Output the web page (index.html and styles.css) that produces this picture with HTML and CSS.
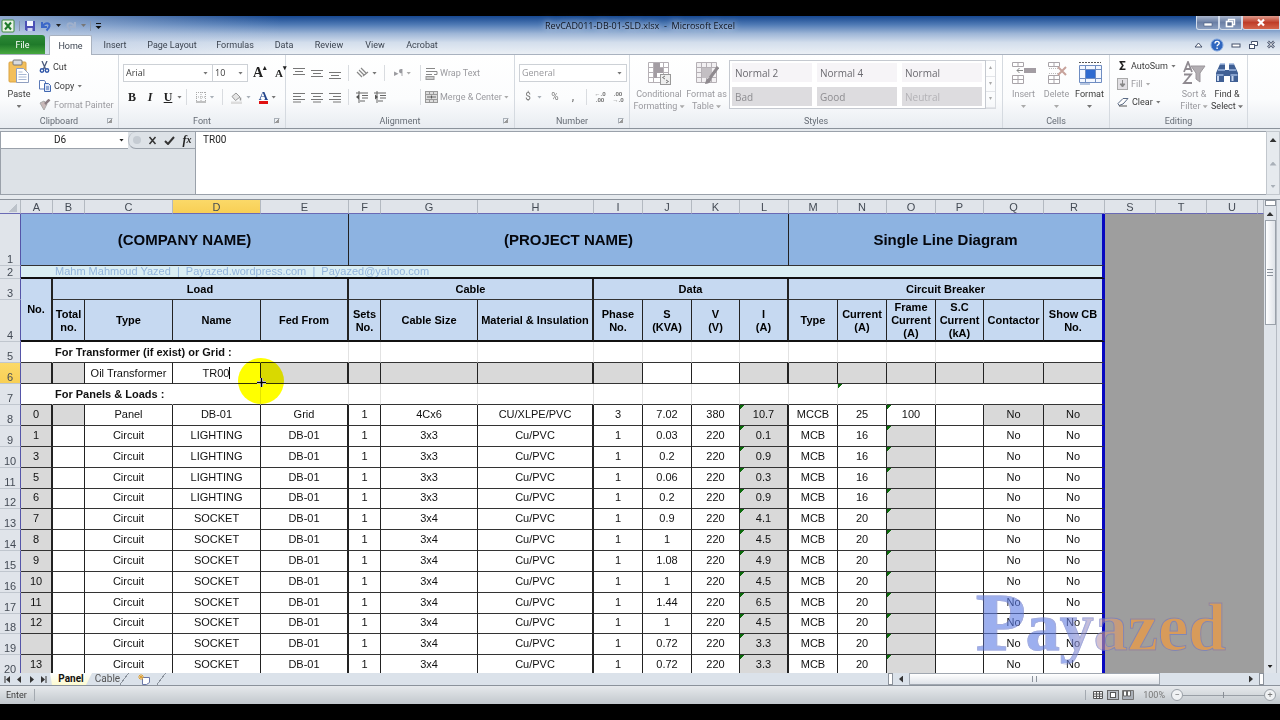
FILE: index.html
```
<!DOCTYPE html>
<html lang="en">
<head>
    <meta charset="UTF-8">
    <meta name="viewport" content="width=device-width, initial-scale=1.0">
    <title>RevCAD011-DB-01-SLD.xlsx - Microsoft Excel</title>
    <link rel="stylesheet" href="styles.css">
</head>
<body>
    <!-- Title bar and ribbon tabs -->
    <header class="window-top">
        <div class="title-bar">
            <div class="quick-access">
                <svg width="14" height="14" viewBox="0 0 14 14"><rect x="1" y="1" width="12" height="12" rx="1" fill="#e9f3e6" stroke="#3c8a3c"/><path d="M4 3.500l6 7M10 3.500l-6 7" stroke="#1f7a2b" stroke-width="2"/></svg>
                <span class="qa-line"></span>
                <button aria-label="Save"><svg width="12" height="12" viewBox="0 0 12 12"><path d="M1 1h10v10H2.500L1 9.500z" fill="#4a4fb5"/><rect x="3" y="1" width="6" height="5" fill="#f4f6ff"/><rect x="3.500" y="8" width="5" height="3" fill="#cfd4f2"/></svg></button>
                <button aria-label="Undo"><svg width="12" height="12" viewBox="0 0 12 12"><path d="M2 2v5h5M2.500 6.500C5 2 10 2.500 9.500 6c-.3 2-1.500 3-3 4.500" fill="none" stroke="#3c68c8" stroke-width="2"/></svg></button>
                <span class="arrow dark"></span>
                <button aria-label="Redo"><svg width="12" height="12" viewBox="0 0 12 12"><path d="M10 2v5H5M9.500 6.500C7 2 2 2.500 2.500 6c.3 2 1.500 3 3 4.500" fill="none" stroke="#9fb0cc" stroke-width="2"/></svg></button>
                <span class="arrow"></span>
                <span class="qa-line"></span>
                <button aria-label="Customize"><svg width="7" height="8" viewBox="0 0 7 8"><path d="M1 1.500h5" stroke="#111"/><path d="M0.500 4h6l-3 3z" fill="#111"/></svg></button>
            </div>
            <h1 class="window-title">RevCAD011-DB-01-SLD.xlsx&nbsp; -&nbsp; Microsoft Excel</h1>
            <div class="window-buttons">
                <button aria-label="Minimize"><svg width="10" height="8" viewBox="0 0 10 8"><rect x="1" y="4" width="8" height="3" fill="#fff" stroke="#46597c" stroke-width=".6"/></svg></button>
                <button aria-label="Restore"><svg width="11" height="10" viewBox="0 0 11 10"><path d="M3.500 3V1.500h6v5H8" fill="none" stroke="#fff" stroke-width="1.400"/><rect x="1.500" y="3.500" width="6" height="5" fill="#5a6d90" stroke="#fff" stroke-width="1.600"/></svg></button>
                <button class="close" aria-label="Close"><svg width="10" height="9" viewBox="0 0 10 9"><path d="M2 1.500l6 6M8 1.500l-6 6" stroke="#fff" stroke-width="2.200"/></svg></button>
            </div>
        </div>
        <nav class="tabs">
            <button class="tab file">File</button>
            <button class="tab active">Home</button>
            <button class="tab insert">Insert</button>
            <button class="tab layout">Page Layout</button>
            <button class="tab formulas">Formulas</button>
            <button class="tab data">Data</button>
            <button class="tab review">Review</button>
            <button class="tab view">View</button>
            <button class="tab acrobat">Acrobat</button>
            <div class="tab-tools">
                <svg width="9" height="8" viewBox="0 0 9 8"><path d="M1 6l3.500-4L8 6z" fill="#fff" stroke="#44506a"/></svg>
                <svg width="14" height="14" viewBox="0 0 14 14"><circle cx="7" cy="7" r="6" fill="#2f66bf" stroke="#7ea3dc"/><path d="M5 5.500c0-3 4.200-2.600 4.200-.3 0 1.500-2.100 1.500-2.100 3M7.100 9.500v1.500" fill="none" stroke="#fff" stroke-width="1.400"/></svg>
                <svg width="10" height="8" viewBox="0 0 10 8"><rect x="1" y="3" width="8" height="3" fill="#fff" stroke="#44506a"/></svg>
                <svg width="11" height="10" viewBox="0 0 11 10"><path d="M3.500 3.500v-2h6v4H7" fill="#fff" stroke="#44506a"/><rect x="1.500" y="4.500" width="5" height="4" fill="#fff" stroke="#44506a"/></svg>
                <svg width="10" height="9" viewBox="0 0 10 9"><path d="M2 1.500l6 6M8 1.500l-6 6" stroke="#44506a" stroke-width="2.600"/><path d="M2 1.500l6 6M8 1.500l-6 6" stroke="#fff"/></svg>
            </div>
        </nav>
    </header>

    <!-- Ribbon -->
    <section class="ribbon">
        <div class="group clipboard">
            <div class="group-body">
                <button class="big paste">
                    <svg width="24" height="26" viewBox="0 0 24 26"><rect x="2" y="3" width="17" height="20" rx="1" fill="#f3bf5b" stroke="#dba445"/><rect x="6" y="1" width="9" height="5" rx="1" fill="#d8dade" stroke="#777"/><path d="M9.500 9.500h7l5 5v9h-12z" fill="#fff" stroke="#8f9fc0"/><path d="M11.500 13h4M11.500 15.500h8M11.500 18h8M11.500 20.500h8" stroke="#a8b8d4"/></svg>
                    <span>Paste</span><span class="arrow"></span>
                </button>
                <div class="stack">
                    <button><svg width="11" height="12" viewBox="0 0 11 12"><path d="M3 0l3.500 8M8 0L4.500 8" stroke="#4a5a7c" stroke-width="1.300"/><circle cx="3" cy="9.500" r="1.700" fill="none" stroke="#2f56a8" stroke-width="1.400"/><circle cx="8" cy="9.500" r="1.700" fill="none" stroke="#2f56a8" stroke-width="1.400"/></svg>Cut</button>
                    <button><svg width="12" height="12" viewBox="0 0 12 12"><path d="M.5.5h5l1 1.500v7h-6z" fill="#fff" stroke="#5b7ab8"/><path d="M5.500 3.500h4l2 2v6h-6z" fill="#dfe8f8" stroke="#3f66b0"/><path d="M7 7h3M7 9h3" stroke="#3f66b0"/></svg>Copy<span class="arrow"></span></button>
                    <button class="off"><svg width="12" height="12" viewBox="0 0 12 12"><path d="M1 4l4-2 3 3-3 6z" fill="#c9b9b9" stroke="#aaa"/><path d="M6 5l4.500-4.500" stroke="#8b7d83" stroke-width="2.500"/></svg>Format Painter</button>
                </div>
            </div>
            <div class="group-name">Clipboard<i class="launcher"></i></div>
        </div>

        <div class="group font">
            <div class="group-body rows">
                <div class="row">
                    <label class="combo family"><select aria-label="Font"><option>Arial</option></select><span class="arrow"></span></label>
                    <label class="combo size"><select aria-label="Font size"><option>10</option></select><span class="arrow"></span></label>
                    <button class="tool serif grow">A<sup>▴</sup></button>
                    <button class="tool serif shrink">A<sup>▾</sup></button>
                </div>
                <div class="row">
                    <button class="tool serif">B</button>
                    <button class="tool serif"><i>I</i></button>
                    <button class="tool serif"><u>U</u></button>
                    <span class="arrow"></span>
                    <span class="line"></span>
                    <button class="tool wide" aria-label="Borders"><svg width="12" height="12" viewBox="0 0 12 12"><path d="M1.500 1v10M6 1v10M10.500 1v10M1 1.500h10M1 6h10" stroke="#aaa" stroke-dasharray="1 1"/><path d="M1 11h10" stroke="#888"/></svg><span class="arrow pale"></span></button>
                    <span class="line"></span>
                    <button class="tool wide" aria-label="Fill color"><svg width="13" height="13" viewBox="0 0 13 13"><path d="M2 5.500L6 2l4 4-4.500 3.500z" fill="#e5e5e5" stroke="#999"/><path d="M10.500 6.500v3" stroke="#999" stroke-width="1.500"/><rect x="1" y="10.500" width="11" height="2.500" fill="#ddd"/></svg><span class="arrow pale"></span></button>
                    <button class="tool wide font-color"><b>A</b><span class="arrow"></span></button>
                </div>
            </div>
            <div class="group-name">Font<i class="launcher"></i></div>
        </div>

        <div class="group alignment">
            <div class="group-body rows">
                <div class="row">
                    <button class="tool" aria-label="Top"><svg width="12" height="12" viewBox="0 0 12 12"><path d="M0 1.500h12M2 4.500h8M0 7.500h12" stroke="#777"/></svg></button>
                    <button class="tool" aria-label="Middle"><svg width="12" height="12" viewBox="0 0 12 12"><path d="M0 3.500h12M2 6.500h8M0 9.500h12" stroke="#777"/></svg></button>
                    <button class="tool" aria-label="Bottom"><svg width="12" height="12" viewBox="0 0 12 12"><path d="M0 5.500h12M2 8.500h8M0 11.500h12" stroke="#777"/></svg></button>
                    <span class="line"></span>
                    <button class="tool wide" aria-label="Orientation"><svg width="13" height="12" viewBox="0 0 13 12"><path d="M1 5l5 5M3 3l5 5M5 1l5 5M7 9l5-4" fill="none" stroke="#888" stroke-width="1.200"/></svg><span class="arrow"></span></button>
                    <span class="line"></span>
                    <button class="tool wide off">▸¶ <span class="arrow"></span></button>
                    <span class="line"></span>
                    <button class="tool text off"><svg width="13" height="13" viewBox="0 0 13 13"><path d="M1 1.500h9M1 4.500h11v3H9M1 7.500h6" fill="none" stroke="#888"/><rect x="1" y="9.500" width="8" height="3" fill="#ccc" stroke="#999"/></svg>Wrap Text</button>
                </div>
                <div class="row">
                    <button class="tool" aria-label="Left"><svg width="12" height="12" viewBox="0 0 12 12"><path d="M0 2.500h12M0 5.500h8M0 8.500h12M0 11h8" stroke="#777"/></svg></button>
                    <button class="tool" aria-label="Center"><svg width="12" height="12" viewBox="0 0 12 12"><path d="M0 2.500h12M2 5.500h8M0 8.500h12M2 11h8" stroke="#777"/></svg></button>
                    <button class="tool" aria-label="Right"><svg width="12" height="12" viewBox="0 0 12 12"><path d="M0 2.500h12M4 5.500h8M0 8.500h12M4 11h8" stroke="#777"/></svg></button>
                    <span class="line"></span>
                    <button class="tool" aria-label="Decrease indent"><svg width="13" height="12" viewBox="0 0 13 12"><path d="M0 2h12M6 4.500h6M6 7h6M4 10h5M3 0v12" stroke="#666"/><path d="M0 6l3-2.500v5z" fill="#555"/></svg></button>
                    <button class="tool" aria-label="Increase indent"><svg width="13" height="12" viewBox="0 0 13 12"><path d="M0 2h12M6 4.500h6M6 7h6M4 10h5M3 0v12" stroke="#666"/><path d="M4 6L1 3.500v5z" fill="#555"/></svg></button>
                    <span class="gap"></span>
                    <span class="line"></span>
                    <button class="tool text off"><svg width="13" height="12" viewBox="0 0 13 12"><rect x=".5" y=".5" width="12" height="11" fill="#ddd" stroke="#999"/><path d="M.5 3.500h12M.5 8.500h12M4.500.5v3M8.500.5v3M4.500 8.500v3M8.500 8.500v3" stroke="#999"/><path d="M2 6h3M8 6h3M6 5h1v2H6z" stroke="#666"/></svg>Merge &amp; Center<span class="arrow"></span></button>
                </div>
            </div>
            <div class="group-name">Alignment<i class="launcher"></i></div>
        </div>

        <div class="group number">
            <div class="group-body rows">
                <div class="row">
                    <label class="combo general"><select aria-label="Number format"><option>General</option></select><span class="arrow"></span></label>
                </div>
                <div class="row">
                    <button class="tool symbol">$</button>
                    <span class="arrow pale"></span>
                    <button class="tool symbol percent">%</button>
                    <button class="tool symbol"><b>,</b></button>
                    <span class="line"></span>
                    <button class="tool decimals">←.0<br>.00</button>
                    <button class="tool decimals">.00<br>→.0</button>
                </div>
            </div>
            <div class="group-name">Number<i class="launcher"></i></div>
        </div>

        <div class="group styles">
            <div class="group-body">
                <button class="big off cond">
                    <svg width="24" height="24" viewBox="0 0 24 24"><path d="M1.500 1.500h20v20h-20zM1.500 6.500h20M1.500 11.500h20M1.500 16.500h20M6.500 1.500v20M16.500 1.500v20" fill="#fff" stroke="#b5b0b5"/><path d="M7 2h6v5h3v5h-6v5H7z" fill="#a39da3"/><rect x="13.500" y="13.500" width="10" height="10" fill="#eee" stroke="#999"/><path d="M18 15l-2.500 1.500L18 18M19 19l2.500 1.500L19 22" fill="none" stroke="#777"/></svg>
                    <span>Conditional<br>Formatting <i class="arrow"></i></span>
                </button>
                <button class="big off table-format">
                    <svg width="24" height="24" viewBox="0 0 24 24"><path d="M1.500 1.500h20v20h-20zM1.500 6.500h20M1.500 11.500h20M1.500 16.500h20M6.500 1.500v20M11.500 1.500v20M16.500 1.500v20" fill="#f2f0f2" stroke="#b5b0b5"/><path d="M7 7h10v10H7z" fill="#c3bfc3"/><path d="M23 6l-8 11" stroke="#8f8a8f" stroke-width="3"/><path d="M10 23c1-5 3-7 6-6 1 3-2 6-6 6z" fill="#8f8a8f"/></svg>
                    <span>Format as<br>Table <i class="arrow"></i></span>
                </button>
                <div class="gallery">
                    <button>Normal 2</button><button>Normal 4</button><button>Normal</button>
                    <button class="bad">Bad</button><button class="bad">Good</button><button class="bad neutral">Neutral</button>
                </div>
                <div class="gallery-scroll"><span>▴</span><span>▾</span><span>▾</span></div>
            </div>
            <div class="group-name">Styles</div>
        </div>

        <div class="group cells">
            <div class="group-body">
                <button class="big off">
                    <svg width="26" height="24" viewBox="0 0 26 24"><path d="M1.500 1.500h11v4h-11zM7 1.500v4M1.500 14.500h11v8h-11zM7 14.500v8M1.500 18.500h11" fill="#fff" stroke="#a9a4a9"/><rect x="13" y="7" width="12" height="5" fill="#a39da3"/><path d="M12 9.500H6M8.500 7L6 9.500 8.500 12" fill="none" stroke="#888"/></svg>
                    <span>Insert</span><span class="arrow"></span>
                </button>
                <button class="big off">
                    <svg width="24" height="24" viewBox="0 0 24 24"><path d="M3.500 1.500h11v4h-11zM9 1.500v4M3.500 14.500h11v8h-11zM9 14.500v8M3.500 18.500h11" fill="#fff" stroke="#a9a4a9"/><path d="M4 7.500h10M4 12.500h10" stroke="#bbb" stroke-dasharray="1 1"/><path d="M13 6l8 8M21 6l-8 8" stroke="#c7a29b" stroke-width="2"/></svg>
                    <span>Delete</span><span class="arrow"></span>
                </button>
                <button class="big">
                    <svg width="26" height="24" viewBox="0 0 26 24"><path d="M2 1.500h22" stroke="#555" stroke-dasharray="2 1"/><path d="M2.500 4.500h22v17h-22zM2.500 8.500h22M2.500 17.500h22M8.500 4.500v17M18.500 4.500v17" fill="#f4f8ff" stroke="#6f8dc2"/><rect x="9" y="9" width="9" height="8" fill="#2f6bd0"/><path d="M3 23h10" stroke="#6f8dc2"/></svg>
                    <span>Format</span><span class="arrow"></span>
                </button>
            </div>
            <div class="group-name">Cells</div>
        </div>

        <div class="group editing">
            <div class="group-body">
                <div class="stack">
                    <button><b class="sigma">Σ</b>AutoSum<span class="arrow"></span></button>
                    <button class="off"><svg width="11" height="12" viewBox="0 0 11 12"><rect x=".5" y=".5" width="10" height="11" fill="#e2e0e4" stroke="#aaa"/><path d="M5.500 2v5M3 6l2.500 3L8 6z" fill="#888" stroke="#888"/></svg>Fill<span class="arrow"></span></button>
                    <button><svg width="12" height="10" viewBox="0 0 12 10"><path d="M1 6.500L6 1.500l5 0-5 5.500-4 1.500z" fill="#fff" stroke="#5a6a85"/><path d="M2 9h8" stroke="#555"/></svg>Clear<span class="arrow"></span></button>
                </div>
                <button class="big off sort">
                    <svg width="26" height="24" viewBox="0 0 26 24"><path d="M3 11L7 1l4 10M4.500 8h5M3 13.500h7L3 22h8" fill="none" stroke="#8f8a90" stroke-width="1.800"/><path d="M10 5h14l-5 7v9l-4-3v-6z" fill="#b2aeb2" stroke="#9b969b"/></svg>
                    <span>Sort &amp;<br>Filter <i class="arrow"></i></span>
                </button>
                <button class="big">
                    <svg width="24" height="24" viewBox="0 0 24 24"><path d="M5 3h5v6h4V3h5l4 9v9h-8v-6h-6v6H1v-9z" fill="#3f5f94"/><path d="M5 3h5M14 3h5M3 9h7M14 9h7M1.500 14h7M15.500 14h7" stroke="#9db6de" stroke-width="1.500"/><path d="M3 15v5M17.500 15v5" stroke="#c5d5ef" stroke-width="2"/></svg>
                    <span>Find &amp;<br>Select <i class="arrow"></i></span>
                </button>
            </div>
            <div class="group-name">Editing</div>
        </div>
    </section>

    <!-- Formula bar -->
    <section class="formula-bar">
        <div class="formula-left">
            <label class="name-box"><input type="text" value="D6" aria-label="Name box"><span class="arrow dark"></span></label>
            <div class="formula-buttons">
                <span class="knob"></span>
                <button aria-label="Cancel"><svg width="9" height="9" viewBox="0 0 9 9"><path d="M1.500 1l6 7M7.500 1l-6 7" stroke="#333" stroke-width="1.500"/></svg></button>
                <button aria-label="Enter"><svg width="11" height="9" viewBox="0 0 11 9"><path d="M1 5l3 3L10 1" fill="none" stroke="#333" stroke-width="2"/></svg></button>
                <button class="fx" aria-label="Insert function">f<small>x</small></button>
            </div>
        </div>
        <textarea aria-label="Formula">TR00</textarea>
        <div class="formula-scroll"><span class="arrow up"></span><span class="arrow up pale"></span><span class="arrow pale"></span></div>
    </section>

    <!-- Worksheet -->
    <main class="sheet">
        <div class="grid">
            <table>
                <colgroup>
                    <col class="w-head"><col class="w-a"><col class="w-b"><col class="w-name"><col class="w-name"><col class="w-name"><col class="w-b"><col class="w-g"><col class="w-h">
                    <col class="w-n"><col class="w-n"><col class="w-k"><col class="w-n"><col class="w-n"><col class="w-n"><col class="w-n"><col class="w-k"><col class="w-q"><col class="w-r">
                    <col class="w-s"><col class="w-s"><col class="w-s"><col>
                </colgroup>
                <thead>
                    <tr class="letters">
                        <th class="corner"></th><th>A</th><th>B</th><th>C</th><th class="selected">D</th><th>E</th><th>F</th><th>G</th><th>H</th><th>I</th><th>J</th><th>K</th><th>L</th><th>M</th><th>N</th><th>O</th><th>P</th><th>Q</th><th>R</th><th>S</th><th>T</th><th>U</th><th></th>
                    </tr>
                </thead>
                <tbody id="rows">
                    <tr class="names">
                        <th>1</th><td colspan="5">(COMPANY NAME)</td><td colspan="7">(PROJECT NAME)</td><td class="edge" colspan="6">Single Line Diagram</td>
                        <td class="outside" rowspan="20" colspan="4"></td>
                    </tr>
                    <tr class="author">
                        <th>2</th><td></td><td class="edge" colspan="17">Mahm Mahmoud Yazed&nbsp; |&nbsp; Payazed.wordpress.com&nbsp; |&nbsp; Payazed@yahoo.com</td>
                    </tr>
                    <tr class="heads">
                        <th>3</th><td class="thick bottom" rowspan="2">No.</td><td class="thick" colspan="4">Load</td><td class="thick" colspan="3">Cable</td><td class="thick" colspan="4">Data</td><td class="edge" colspan="6">Circuit Breaker</td>
                    </tr>
                    <tr class="heads tall">
                        <th>4</th><td>Total<br>no.</td><td>Type</td><td>Name</td><td class="thick">Fed From</td><td>Sets<br>No.</td><td>Cable Size</td><td class="thick">Material &amp; Insulation</td><td>Phase<br>No.</td><td>S<br>(KVA)</td><td>V<br>(V)</td><td class="thick">I<br>(A)</td><td>Type</td><td>Current<br>(A)</td><td>Frame<br>Current<br>(A)</td><td>S.C<br>Current<br>(kA)</td><td>Contactor</td><td class="edge">Show CB<br>No.</td>
                    </tr>
                    <tr class="section">
                        <th>5</th><td class="plain"></td><td class="label" colspan="3">For Transformer (if exist) or Grid :</td><td></td><td></td><td></td><td></td><td></td><td></td><td></td><td></td><td></td><td></td><td></td><td class="plain"></td><td class="plain"></td><td class="edge"></td>
                    </tr>
                    <tr class="blank">
                        <th class="selected">6</th><td class="thick"></td><td></td><td class="open">Oil Transformer</td>
                        <td class="open editing-cell"><span class="typing" contenteditable="true">TR00</span><span class="halo"></span><svg class="cross" width="11" height="11" viewBox="0 0 11 11"><path d="M5.500 1v9M1 5.500h9" stroke="#fff" stroke-width="3"/><path d="M5.500 1v9M1 5.500h9" stroke="#000" stroke-width="1.600"/></svg></td>
                        <td class="thick"></td><td></td><td></td><td class="thick"></td><td></td><td class="open"></td><td class="open"></td><td class="thick"></td><td></td><td></td><td></td><td></td><td></td><td class="edge"></td>
                    </tr>
                    <tr class="section">
                        <th>7</th><td class="plain"></td><td class="label" colspan="2">For Panels &amp; Loads :</td><td></td><td></td><td></td><td></td><td></td><td></td><td></td><td></td><td></td><td></td><td class="flag"></td><td></td><td class="plain"></td><td class="plain"></td><td class="edge"></td>
                    </tr>
                </tbody>
            </table>
            <div class="watermark">Payazed</div>
        </div>
        <div class="v-scroll">
            <span class="split"></span><span class="arrow up"></span><span class="thumb"></span><span class="arrow dark"></span>
        </div>
    </main>

    <!-- Sheet tabs -->
    <div class="sheet-bar">
        <div class="sheet-nav">
            <svg width="7" height="7" viewBox="0 0 7 7"><path d="M1 0v7" stroke="#333"/><path d="M6 0v7L2 3.500z" fill="#333"/></svg>
            <svg width="7" height="7" viewBox="0 0 7 7"><path d="M5 0v7L1 3.500z" fill="#333"/></svg>
            <svg width="7" height="7" viewBox="0 0 7 7"><path d="M2 0v7l4-3.500z" fill="#333"/></svg>
            <svg width="7" height="7" viewBox="0 0 7 7"><path d="M6 0v7" stroke="#333"/><path d="M1 0v7l4-3.500z" fill="#333"/></svg>
        </div>
        <button class="sheet-tab current">Panel</button>
        <button class="sheet-tab">Cable</button>
        <button class="sheet-tab" aria-label="Insert sheet"><svg width="13" height="11" viewBox="0 0 13 11"><path d="M4.500 3.500h7v5l-3 2h-4z" fill="#fff" stroke="#6b78a8"/><path d="M3 0v6M0 3h6M1 1l4 4M5 1L1 5" stroke="#e0a030"/></svg></button>
        <div class="h-scroll">
            <span class="split"></span><span class="arrow left"></span>
            <div class="h-track"><span class="h-thumb"><i></i></span></div>
            <span class="arrow right"></span><span class="split"></span>
        </div>
    </div>

    <!-- Status bar -->
    <footer class="status-bar">
        <span class="mode">Enter</span>
        <div class="views">
            <svg width="12" height="10" viewBox="0 0 12 10"><path d="M1.500 1.500h9v7h-9zM1.500 4h9M1.500 6.300h9M4.500 1.500v7M7.500 1.500v7" fill="#fff" stroke="#555"/></svg>
            <svg width="12" height="10" viewBox="0 0 12 10"><rect x=".5" y=".5" width="11" height="9" fill="#b9bdc3" stroke="#666"/><rect x="3.500" y="2.500" width="5" height="5" fill="#fff" stroke="#555"/></svg>
            <svg width="12" height="10" viewBox="0 0 12 10"><path d="M.5.5h11v9H.5z" fill="#aab0b8" stroke="#777"/><path d="M1.500 1h3v5h-3zM5.500 1h3v5h-3z" fill="#fff" stroke="#666"/></svg>
        </div>
        <span class="zoom-value">100%</span>
        <button class="round" aria-label="Zoom out">−</button>
        <input type="range" min="10" max="400" value="205" aria-label="Zoom">
        <button class="round" aria-label="Zoom in">+</button>
    </footer>

    <script>
        // No., Type, Name, Fed From, Sets, Cable Size, Material, Phase, S, V, I, CB Type, Current, Frame
        const loads = [
            ["0", "Panel", "DB-01", "Grid", 1, "4Cx6", "CU/XLPE/PVC", 3, 7.02, 380, "10.7", "MCCB", 25, "100"],
            ["1", "Circuit", "LIGHTING", "DB-01", 1, "3x3", "Cu/PVC", 1, 0.03, 220, "0.1", "MCB", 16, ""],
            ["3", "Circuit", "LIGHTING", "DB-01", 1, "3x3", "Cu/PVC", 1, 0.2, 220, "0.9", "MCB", 16, ""],
            ["5", "Circuit", "LIGHTING", "DB-01", 1, "3x3", "Cu/PVC", 1, 0.06, 220, "0.3", "MCB", 16, ""],
            ["6", "Circuit", "LIGHTING", "DB-01", 1, "3x3", "Cu/PVC", 1, 0.2, 220, "0.9", "MCB", 16, ""],
            ["7", "Circuit", "SOCKET", "DB-01", 1, "3x4", "Cu/PVC", 1, 0.9, 220, "4.1", "MCB", 20, ""],
            ["8", "Circuit", "SOCKET", "DB-01", 1, "3x4", "Cu/PVC", 1, 1, 220, "4.5", "MCB", 20, ""],
            ["9", "Circuit", "SOCKET", "DB-01", 1, "3x4", "Cu/PVC", 1, 1.08, 220, "4.9", "MCB", 20, ""],
            ["10", "Circuit", "SOCKET", "DB-01", 1, "3x4", "Cu/PVC", 1, 1, 220, "4.5", "MCB", 20, ""],
            ["11", "Circuit", "SOCKET", "DB-01", 1, "3x4", "Cu/PVC", 1, 1.44, 220, "6.5", "MCB", 20, ""],
            ["12", "Circuit", "SOCKET", "DB-01", 1, "3x4", "Cu/PVC", 1, 1, 220, "4.5", "MCB", 20, ""],
            ["", "Circuit", "SOCKET", "DB-01", 1, "3x4", "Cu/PVC", 1, 0.72, 220, "3.3", "MCB", 20, ""],
            ["13", "Circuit", "SOCKET", "DB-01", 1, "3x4", "Cu/PVC", 1, 0.72, 220, "3.3", "MCB", 20, ""]
        ];

        const body = document.getElementById('rows');
        loads.forEach((load, i) => {
            const first = i === 0;
            const cells = [load[0], "", ...load.slice(1), "", "No", "No"];
            const tr = document.createElement('tr');
            tr.className = 'load';
            tr.innerHTML = `<th>${i + 8}</th>` + cells.map((value, c) => {
                const names = [];
                if (c === 0 || c === 11 || (c === 1 && first) || (c === 14 && !first) || (c > 15 && first)) names.push('grey');
                if (c === 11 || c === 14) names.push('flag');
                if ([0, 4, 7, 11].includes(c)) names.push('thick');
                if (c === 17) names.push('edge');
                return `<td class="${names.join(' ')}">${value}</td>`;
            }).join('');
            body.appendChild(tr);
        });
    </script>
</body>
</html>
```
FILE: styles.css
```
* {
    box-sizing: border-box;
}

body {
    display: flex;
    flex-direction: column;
    height: 100vh;
    margin: 0;
    padding: 16px 0;
    background-color: #000;
    color: #3b3b3b;
    font-family: Roboto, "Open Sans", sans-serif;
    font-size: 9px;
    line-height: 12px;
    overflow: hidden;
}

button, input, select, textarea {
    margin: 0;
    padding: 0;
    border: 0;
    background: none;
    color: inherit;
    font: inherit;
}

svg {
    flex: none;
}

.arrow {
    display: inline-block;
    flex: none;
    width: 5px;
    height: 3px;
    background-color: #777;
    clip-path: polygon(0 0, 100% 0, 50% 100%);
}

.arrow.dark {
    background-color: #222;
}

.arrow.up {
    height: 4px;
    width: 7px;
    background-color: #333;
    clip-path: polygon(50% 0, 100% 100%, 0 100%);
}

.arrow.left, .arrow.right {
    width: 4px;
    height: 7px;
    background-color: #333;
    clip-path: polygon(0 50%, 100% 0, 100% 100%);
}

.arrow.right {
    clip-path: polygon(0 0, 100% 50%, 0 100%);
}

.arrow.pale {
    background-color: #a9b0b8;
}

/* Title bar */
.window-top {
    flex: none;
    background: linear-gradient(to right, rgba(190, 205, 228, 0.7), rgba(190, 205, 228, 0) 22%),
        linear-gradient(to bottom, #16478f, #4f7ab5 22%, #9db5d6 45%, #d3deec 68%, #edf1f6);
}

.title-bar {
    display: grid;
    grid-template-columns: 1fr auto 1fr;
    height: 19px;
}

.quick-access {
    display: flex;
    align-items: center;
    gap: 4px;
    padding-left: 1px;
}

.quick-access button {
    display: flex;
}

.qa-line {
    width: 1px;
    height: 10px;
    background-color: #8795ac;
}

.window-title {
    margin: 0;
    padding-top: 4px;
    color: #10151f;
    font-family: "Open Sans", sans-serif;
    font-size: 9px;
    font-weight: normal;
    text-shadow: 0 0 5px #c8d6ec, 0 0 8px #c8d6ec;
}

.window-buttons {
    display: flex;
    justify-content: flex-end;
    height: 14px;
}

.window-buttons button {
    display: flex;
    align-items: center;
    justify-content: center;
    width: 23px;
    border: 1px solid #d3dcea;
    border-top: 0;
    border-radius: 0 0 0 3px;
    background: linear-gradient(#a8b5cc, #6b7fa5 50%, #8b9fc0);
}

.window-buttons .close {
    width: 38px;
    background: linear-gradient(#dd9a8c, #bf3d28 50%, #d4644a);
}

.tabs {
    display: flex;
    height: 20px;
    border-bottom: 1px solid #a9b2bf;
}

.tab {
    color: #3c4450;
}

.tab.file {
    width: 45px;
    border-radius: 3px 3px 0 0;
    background: linear-gradient(#2d8a37, #1f7a2a 50%, #47a83f);
    color: #fff;
}

.tab.active {
    width: 43px;
    height: 20px;
    margin-left: 4px;
    border: 1px solid #a9b2bf;
    border-bottom: 0;
    border-radius: 2px 2px 0 0;
    background-color: #fff;
}

.tab.insert {
    width: 46px;
}

.tab.layout {
    width: 68px;
}

.tab.formulas {
    width: 58px;
}

.tab.data {
    width: 40px;
}

.tab.review {
    width: 50px;
}

.tab.view {
    width: 42px;
}

.tab.acrobat {
    width: 52px;
}

.tab-tools {
    display: flex;
    align-items: center;
    gap: 7px;
    margin-left: auto;
    padding-right: 4px;
}

/* Ribbon */
.ribbon {
    display: flex;
    flex: none;
    height: 74px;
    border-bottom: 1px solid #8b929b;
    background: linear-gradient(#fff, #fbfcfd 60%, #e8ecf1);
}

.group {
    display: flex;
    flex: none;
    flex-direction: column;
    justify-content: space-between;
    padding: 4px 4px 1px;
    border-right: 1px solid #d5dae0;
}

.clipboard {
    width: 119px;
}

.font {
    width: 167px;
}

.alignment {
    width: 229px;
}

.number {
    width: 115px;
}

.styles {
    width: 373px;
}

.cells {
    width: 107px;
}

.editing {
    width: 138px;
}

.group-body {
    display: flex;
    align-items: flex-start;
}

.group-body.rows {
    flex-direction: column;
    gap: 6px;
    padding-top: 5px;
}

.group-name {
    display: flex;
    justify-content: center;
    position: relative;
    color: #666c75;
}

.launcher {
    position: absolute;
    right: 1px;
    bottom: 3px;
    width: 6px;
    height: 6px;
    border: 1px solid #a9b0b8;
    border-right-color: transparent;
    border-bottom-color: transparent;
    background: linear-gradient(135deg, transparent 50%, #999 50%) right bottom / 4px 4px no-repeat;
}

.big {
    display: flex;
    flex: none;
    flex-direction: column;
    align-items: center;
    gap: 3px;
    padding-top: 2px;
    white-space: nowrap;
}

.big span .arrow {
    vertical-align: middle;
}

.big > .arrow {
    margin-top: 2px;
}

.off {
    color: #9a9a9f;
}

.off .arrow {
    background-color: #aaa;
}

.paste {
    width: 30px;
    margin-right: 5px;
    padding-top: 0;
}

.stack {
    display: flex;
    flex-direction: column;
    gap: 7px;
    padding-top: 2px;
}

.stack button {
    display: flex;
    align-items: center;
    gap: 3px;
    height: 12px;
    white-space: nowrap;
}

.sigma {
    width: 11px;
    color: #222;
    font-size: 12px;
}

.row {
    display: flex;
    align-items: center;
    height: 18px;
}

.combo {
    display: flex;
    align-items: center;
    height: 18px;
    padding: 0 4px 0 2px;
    border: 1px solid #cdd1d6;
    background-color: #fff;
    font-family: "Open Sans", sans-serif;
}

.combo select {
    flex: 1;
    min-width: 0;
    appearance: none;
}

.family {
    width: 90px;
}

.size {
    width: 35px;
    border-left: 0;
}

.general {
    width: 108px;
    color: #98989c;
}

.tool {
    display: flex;
    align-items: center;
    justify-content: center;
    flex: none;
    width: 18px;
    height: 16px;
}

.tool.wide {
    gap: 3px;
    width: 27px;
}

.tool.text {
    gap: 2px;
    width: auto;
    white-space: nowrap;
}

.serif {
    color: #222;
    font-family: "Liberation Serif", serif;
    font-size: 12px;
    font-weight: bold;
}

.serif sup {
    align-self: flex-start;
    font-size: 7px;
    line-height: 7px;
}

.grow {
    width: 24px;
    font-size: 14px;
}

.shrink {
    font-size: 11px;
}

.font-color b {
    height: 14px;
    border-bottom: 3px solid #e01010;
    color: #24468c;
    font-family: "Liberation Serif", serif;
    font-size: 13px;
    line-height: 11px;
}

.line {
    width: 1px;
    height: 16px;
    margin: 0 4px;
    background-color: #d9dce0;
}

.gap {
    width: 27px;
}

.symbol {
    color: #777;
    font-size: 10px;
}

.percent {
    margin-left: 4px;
}

.decimals {
    color: #777;
    font-size: 6px;
    line-height: 6px;
    font-weight: bold;
}

.cond {
    width: 50px;
}

.table-format {
    width: 45px;
}

.gallery {
    display: grid;
    grid-template-columns: 80px 80px 80px;
    gap: 5px;
    flex: none;
    width: 257px;
    height: 49px;
    margin-top: 1px;
    padding: 2px;
    border: 1px solid #c5c9d0;
    background-color: #fff;
}

.gallery button {
    padding-left: 3px;
    background-color: #f6f4f7;
    color: #6b6a70;
    font-family: "Open Sans", sans-serif;
    font-size: 10px;
    text-align: left;
}

.gallery .bad {
    background-color: #dddcdf;
    color: #8d8c90;
}

.gallery .neutral {
    color: #b3b2b6;
}

.gallery-scroll {
    display: flex;
    flex: none;
    flex-direction: column;
    width: 10px;
    height: 49px;
    margin-top: 1px;
    border: 1px solid #d8dbe0;
    border-left: 0;
    color: #aaa;
    font-size: 6px;
}

.gallery-scroll span {
    flex: 1;
    border-bottom: 1px solid #e3e5e9;
    text-align: center;
}

.cells .group-body {
    padding-left: 0;
}

.cells .big {
    width: 33px;
}

.editing .stack {
    width: 64px;
    gap: 6px;
    padding: 1px 0 0 3px;
}

.sort {
    width: 34px;
}

.editing .big:last-child {
    width: 32px;
}

/* Formula bar */
.formula-bar {
    display: flex;
    flex: none;
    height: 71px;
    padding: 2px 0 4px;
    border-bottom: 1px solid #8b929b;
    background-color: #e6eaee;
}

.formula-left {
    display: flex;
    align-items: flex-start;
    flex: none;
    width: 196px;
    border: 1px solid #9aa1aa;
    background-color: #dde2e7;
}

.name-box {
    display: flex;
    align-items: center;
    width: 127px;
    height: 17px;
    padding-right: 4px;
    border-bottom: 1px solid #9aa1aa;
    background-color: #fff;
}

.name-box input {
    flex: 1;
    min-width: 0;
    color: #222;
    font-size: 10px;
    text-align: center;
}

.formula-buttons {
    display: flex;
    align-items: center;
    justify-content: space-around;
    flex: 1;
    height: 17px;
    border-bottom: 1px solid #9aa1aa;
    border-left: 1px solid #b5bbc3;
    border-radius: 8px 0 0 8px;
}

.formula-buttons button {
    display: flex;
}

.knob {
    width: 8px;
    height: 8px;
    border-radius: 4px;
    background-color: #c5cbd2;
}

.fx {
    color: #222;
    font-family: "Liberation Serif", serif;
    font-size: 12px;
    font-style: italic;
    font-weight: bold;
}

.formula-bar textarea {
    flex: 1;
    min-width: 0;
    padding: 2px 7px;
    border: solid #9aa1aa;
    border-width: 1px 0;
    background-color: #fff;
    color: #222;
    font-size: 10px;
    resize: none;
}

.formula-scroll {
    display: flex;
    flex-direction: column;
    align-items: center;
    justify-content: space-between;
    width: 14px;
    padding: 6px 0;
    border: 1px solid #c2c7cd;
}

/* Worksheet */
.sheet {
    display: flex;
    flex: 1;
    min-height: 0;
    background-color: #dfe4ea;
}

.grid {
    position: relative;
    flex: 1;
    min-width: 0;
    overflow: hidden;
    background-color: #9e9e9e;
}

table {
    width: 100%;
    border-spacing: 0;
    table-layout: fixed;
    color: #111;
    font-family: "Liberation Sans", Arial, sans-serif;
    font-size: 11px;
    line-height: 13px;
}

.w-head {
    width: 21px;
}

.w-a {
    width: 32px;
}

.w-b {
    width: 32px;
}

.w-name {
    width: 88px;
}

.w-g {
    width: 97px;
}

.w-h {
    width: 116px;
}

.w-n {
    width: 49px;
}

.w-k {
    width: 48px;
}

.w-q {
    width: 60px;
}

.w-r {
    width: 61px;
}

.w-s {
    width: 51px;
}

th, td {
    height: 21px;
    padding: 0;
    text-align: center;
    white-space: nowrap;
}

th {
    border-right: 1px solid #5555a8;
    border-bottom: 1px solid #c0c6ce;
    background-color: #e0e4ea;
    color: #444b55;
    font-weight: normal;
    line-height: 12px;
    vertical-align: bottom;
}

td {
    border-right: 1px solid #222;
    border-bottom: 1px solid #333;
    background-color: #fff;
}

.letters th {
    height: 14px;
    border-right: 1px solid #b3b9c1;
    border-bottom: 1px solid #6a6ab5;
}

.letters .corner {
    background: linear-gradient(135deg, transparent 70%, #bcc2ca 70%) 0 0 / 17px 12px no-repeat #e0e4ea;
}

.letters .selected, th.selected {
    background: linear-gradient(#fbd968, #f8cf55);
}

.names td {
    height: 52px;
    background-color: #8db3e1;
    color: #05070d;
    font-size: 15px;
    font-weight: bold;
}

.author th, .author td {
    height: 13px;
    line-height: 11px;
}

.author td {
    border-right: 0;
    border-bottom: 2px solid #111;
    background-color: #daeef3;
    color: #93b5dc;
    padding-left: 2px;
    text-align: left;
}

.heads td {
    background-color: #c6d9f1;
    color: #000;
    font-weight: bold;
}

.tall td {
    height: 42px;
    padding-top: 1px;
}

.tall td, .heads .bottom {
    border-bottom: 2px solid #111;
}

.section td {
    border-right-color: #e2e2e2;
}

.section .plain {
    border-right-color: #fff;
}

.section .label {
    border-right-color: #fff;
    padding-left: 2px;
    font-weight: bold;
    text-align: left;
}

.blank td, .load .grey {
    background-color: #d9d9d9;
}

.blank .open {
    background-color: #fff;
}

.thick {
    border-right: 2px solid #222;
}

td.edge {
    border-right: 3px solid #0808c0;
}

.names .outside {
    border: 0;
    background-color: #9e9e9e;
}

.load td {
    padding-bottom: 2px;
}

/* keeps the row pitch a little under 21px */
.load:nth-child(6n) td, .load:nth-child(6n) th {
    height: 20px;
}

.flag {
    background-image: linear-gradient(135deg, #0b6b0b 3px, transparent 3px);
}

.editing-cell {
    position: relative;
}

.typing {
    border-right: 1px solid #000;
    outline: none;
}

.halo {
    position: absolute;
    right: -24px;
    bottom: -21px;
    width: 46px;
    height: 46px;
    border-radius: 50%;
    background-color: #ff0;
    mix-blend-mode: multiply;
}

.cross {
    position: absolute;
    right: -7px;
    bottom: -5px;
}

.watermark {
    position: absolute;
    right: 38px;
    bottom: 10px;
    background: linear-gradient(to right, #5b7be6 35%, #b59ab8 48%, #ff9a2e 62%);
    background-clip: text;
    color: transparent;
    font-family: "Liberation Serif", serif;
    font-size: 68px;
    font-weight: bold;
    line-height: 72px;
    opacity: 0.6;
    -webkit-text-stroke: 1px #6a78c8;
}

.watermark::first-letter {
    font-size: 82px;
}

.v-scroll {
    display: flex;
    flex-direction: column;
    align-items: center;
    flex: none;
    width: 13px;
    margin-right: 3px;
    padding-bottom: 5px;
    border-right: 1px solid #b5bbc3;
}

.v-scroll .split {
    width: 11px;
    height: 6px;
    margin-bottom: 6px;
    border: 1px solid #8b929b;
    background-color: #fff;
}

.v-scroll .thumb {
    width: 11px;
    height: 105px;
    margin: 4px 0 auto;
    border: 1px solid #9aa1aa;
    background: repeating-linear-gradient(#8b929b 0 1px, transparent 1px 3px) center / 6px 7px no-repeat, linear-gradient(to right, #fff, #dfe3e9);
}

/* Sheet tabs */
.sheet-bar {
    display: flex;
    flex: none;
    height: 13px;
    border-bottom: 1px solid #8b929b;
    background-color: #dbe2ea;
}

.sheet-nav {
    display: flex;
    align-items: center;
    gap: 5px;
    width: 50px;
    padding-left: 4px;
}

.sheet-tab {
    display: flex;
    align-items: center;
    justify-content: center;
    width: 37px;
    padding-right: 6px;
    background: linear-gradient(to bottom right, transparent 47%, #8b929b 47% 54%, transparent 54%) right / 9px 100% no-repeat;
    color: #555;
    font-size: 10px;
    transform: none;
}

.sheet-tab:not(.current) {
    background-image: linear-gradient(to bottom right, transparent 45%, #8b929b 45% 52%, transparent 52%);
}

.sheet-tab.current {
    width: 42px;
    padding-right: 0;
    background: linear-gradient(#fff, #fdfbd0);
    clip-path: polygon(0 0, 100% 0, 36px 100%, 2px 100%);
    color: #111;
    font-weight: bold;
}

.h-scroll {
    display: flex;
    align-items: center;
    gap: 6px;
    width: 376px;
    margin-left: auto;
    margin-right: 16px;
}

.h-scroll .split {
    width: 5px;
    height: 12px;
    border: 1px solid #8b929b;
    background-color: #fff;
}

.h-track {
    flex: 1;
    height: 12px;
}

.h-thumb {
    display: flex;
    align-items: center;
    justify-content: center;
    width: 75%;
    height: 12px;
    border: 1px solid #a0a7b0;
    background: linear-gradient(#fff, #dfe3e9);
}

.h-thumb i {
    width: 5px;
    height: 6px;
    border: solid #8b929b;
    border-width: 0 1px;
}

/* Status bar */
.status-bar {
    display: flex;
    align-items: center;
    flex: none;
    height: 18px;
    padding: 0 4px 0 6px;
    background: linear-gradient(#e6e9ec, #c2c8cd);
}

.mode {
    width: 29px;
    border-right: 1px solid #a3a9b0;
}

.views {
    display: flex;
    gap: 3px;
    margin-left: auto;
    padding-left: 6px;
    border-left: 1px solid #a3a9b0;
}

.zoom-value {
    margin: 0 6px 0 9px;
    color: #777;
}

.round {
    flex: none;
    width: 12px;
    height: 12px;
    border: 1px solid #999fa6;
    border-radius: 50%;
    background-color: #f0f2f4;
    color: #777;
    line-height: 9px;
}

.status-bar input {
    width: 81px;
    height: 12px;
    appearance: none;
    background: linear-gradient(#999fa6, #999fa6) center / 100% 1px no-repeat;
}

.status-bar input::-webkit-slider-thumb {
    width: 1px;
    height: 6px;
    appearance: none;
    background-color: #888e95;
}
```
